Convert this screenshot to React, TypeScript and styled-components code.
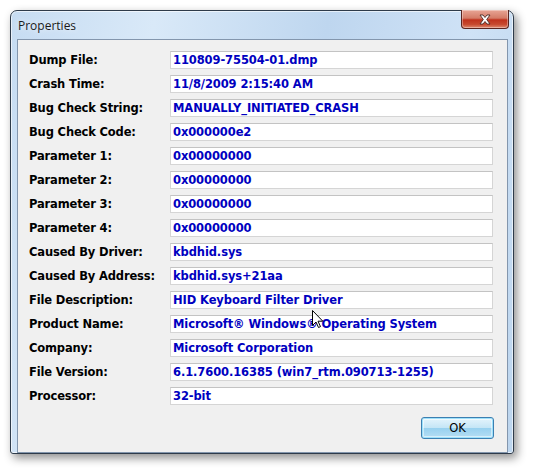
import styled, { createGlobalStyle } from "styled-components";

const GlobalStyle = createGlobalStyle`
  html, body {
    margin: 0;
    padding: 0;
    background: #ffffff;
  }
  body {
    width: 533px;
    height: 472px;
    overflow: hidden;
  }
`;

const rows: [string, string][] = [
  ["Dump File:", "110809-75504-01.dmp"],
  ["Crash Time:", "11/8/2009 2:15:40 AM"],
  ["Bug Check String:", "MANUALLY_INITIATED_CRASH"],
  ["Bug Check Code:", "0x000000e2"],
  ["Parameter 1:", "0x00000000"],
  ["Parameter 2:", "0x00000000"],
  ["Parameter 3:", "0x00000000"],
  ["Parameter 4:", "0x00000000"],
  ["Caused By Driver:", "kbdhid.sys"],
  ["Caused By Address:", "kbdhid.sys+21aa"],
  ["File Description:", "HID Keyboard Filter Driver"],
  ["Product Name:", "Microsoft® Windows® Operating System"],
  ["Company:", "Microsoft Corporation"],
  ["File Version:", "6.1.7600.16385 (win7_rtm.090713-1255)"],
  ["Processor:", "32-bit"],
];

const Stage = styled.div`
  position: relative;
  padding: 10px 0 0 10px;
`;

const Window = styled.div`
  width: 502px;
  height: 442px;
  border: 1px solid #2e3b4a;
  border-radius: 7px 7px 3px 3px;
  background: linear-gradient(100deg, #c6dcf2 0%, #d9e9f8 25%, #bed6ef 55%, #cfe2f6 80%, #bcd5ee 100%);
  box-shadow: 3px 4px 10px rgba(0, 0, 0, 0.45), inset 0 0 0 1px rgba(255, 255, 255, 0.6);
  display: flex;
  flex-direction: column;
`;

const TitleBar = styled.div`
  height: 28px;
  display: flex;
  align-items: flex-start;
  justify-content: space-between;
  padding-left: 7px;
  padding-right: 4px;
`;

const Title = styled.div`
  font-family: "Open Sans", "DejaVu Sans", sans-serif;
  font-size: 12px;
  color: #1a1a1a;
  margin-top: 6px;
  text-shadow: 0 0 6px rgba(255, 255, 255, 0.9);
`;

const CloseButton = styled.div`
  width: 46px;
  height: 18px;
  margin-top: -1px;
  border: 1px solid #5a2520;
  border-top: none;
  border-radius: 0 0 4px 4px;
  background: linear-gradient(180deg, #e8a595 0%, #d47c68 45%, #c0321d 55%, #c74a30 80%, #e08a70 100%);
  box-shadow: inset 0 0 0 1px rgba(255, 255, 255, 0.35);
  display: flex;
  align-items: center;
  justify-content: center;
`;

const Client = styled.div`
  margin: 0 5px 0 6px;
  height: 406px;
  border: 1px solid #8396ad;
  background: #f0f0f0;
  padding: 11px 13px 0 11px;
  display: flex;
  flex-direction: column;
`;

const FieldGrid = styled.div`
  display: grid;
  grid-template-columns: 141px 323px;
  row-gap: 6px;
  align-items: center;
`;

const Label = styled.div`
  font-family: "DejaVu Sans", Tahoma, sans-serif;
  font-weight: bold;
  font-size: 11.5px;
  color: #000000;
  letter-spacing: -0.15px;
`;

const Value = styled.div`
  height: 16px;
  border: 1px solid #d5d5d5;
  border-top-color: #c3c3c3;
  background: #ffffff;
  padding: 0 2px;
  font-family: "DejaVu Sans", Tahoma, sans-serif;
  font-weight: bold;
  font-size: 11.5px;
  line-height: 16px;
  color: #0000c0;
  letter-spacing: -0.1px;
  white-space: nowrap;
  overflow: hidden;
`;

const Footer = styled.div`
  display: flex;
  justify-content: flex-end;
  margin-top: 12px;
`;

const OkButton = styled.div`
  width: 71px;
  height: 20px;
  border: 1px solid #3c7fb1;
  border-radius: 3px;
  background: linear-gradient(180deg, #e5f4fc 0%, #c4e5f6 50%, #98d1ef 52%, #b6def4 100%);
  box-shadow: inset 0 0 0 1px #9ee1fb, inset 0 0 0 2px rgba(255, 255, 255, 0.5);
  font-family: "DejaVu Sans", Tahoma, sans-serif;
  font-size: 11.5px;
  color: #000;
  display: flex;
  align-items: center;
  justify-content: center;
`;

const Cursor = styled.svg`
  position: absolute;
  left: 312px;
  top: 310px;
`;

export default function App() {
  return (
    <Stage>
      <GlobalStyle />
      <Window>
        <TitleBar>
          <Title>Properties</Title>
          <CloseButton>
            <svg width="14" height="11" viewBox="0 0 14 11">
              <path
                d="M2 1 L5 1 L7 3.5 L9 1 L12 1 L8.7 5.5 L12 10 L9 10 L7 7.5 L5 10 L2 10 L5.3 5.5 Z"
                fill="#ffffff"
                stroke="#4a2a25"
                strokeWidth="0.9"
                strokeLinejoin="round"
              />
            </svg>
          </CloseButton>
        </TitleBar>
        <Client>
          <FieldGrid>
            {rows.map(([label, value]) => (
              <>
                <Label key={label + "l"}>{label}</Label>
                <Value key={label + "v"}>{value}</Value>
              </>
            ))}
          </FieldGrid>
          <Footer>
            <OkButton>OK</OkButton>
          </Footer>
        </Client>
      </Window>
      <Cursor width="12" height="19" viewBox="0 0 12 19">
        <path
          d="M0.5 0.5 L0.5 15.5 L4 12 L6.5 17.5 L8.5 16.6 L6 11.2 L10.8 11.2 Z"
          fill="#ffffff"
          stroke="#000000"
          strokeWidth="1"
          strokeLinejoin="miter"
        />
      </Cursor>
    </Stage>
  );
}
